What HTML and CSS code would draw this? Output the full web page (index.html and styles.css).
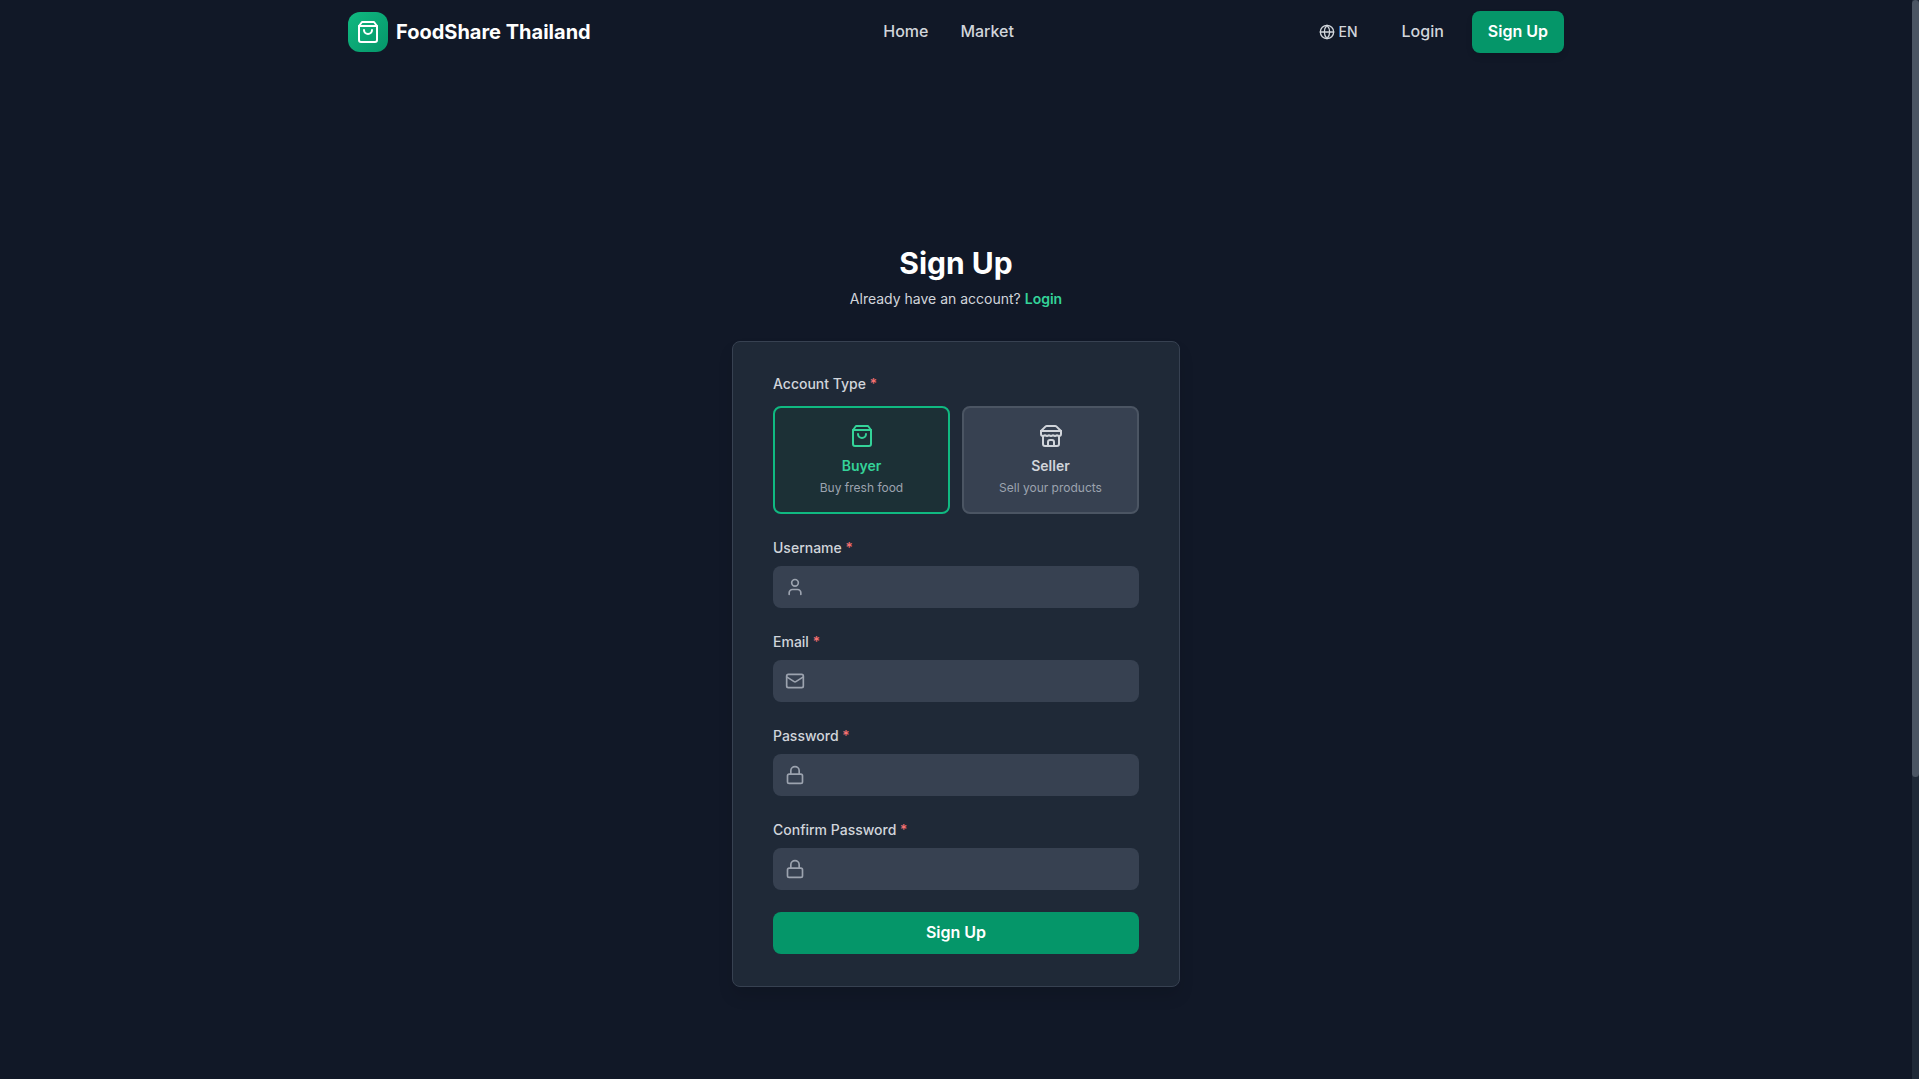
FILE: index.html
```
<!DOCTYPE html>
<html lang="en">
<head>
    <meta charset="UTF-8">
    <meta name="viewport" content="width=device-width, initial-scale=1.0">
    <title>Sign Up - FoodShare Thailand</title>
    <link rel="stylesheet" href="styles.css">
</head>
<body>
    <!-- Shared icons -->
    <svg class="icon-defs" aria-hidden="true">
        <symbol id="icon-bag" viewBox="0 0 24 24">
            <path d="M6 2 3 6v14a2 2 0 0 0 2 2h14a2 2 0 0 0 2-2V6l-3-4Z"/>
            <path d="M3 6h18"/>
            <path d="M16 10a4 4 0 0 1-8 0"/>
        </symbol>
        <symbol id="icon-lock" viewBox="0 0 24 24">
            <rect x="3" y="11" width="18" height="11" rx="2"/>
            <path d="M7 11V7a5 5 0 0 1 10 0v4"/>
        </symbol>
    </svg>

    <div class="page">
        <header class="navbar">
            <div class="navbar-inner">
                <a class="brand" href="#">
                    <span class="brand-logo"><svg class="icon icon-lg"><use href="#icon-bag"/></svg></span>
                    <span class="brand-name">FoodShare Thailand</span>
                </a>
                <nav class="nav-links">
                    <a href="#">Home</a>
                    <a href="#">Market</a>
                </nav>
                <div class="nav-actions">
                    <button class="lang-btn" type="button">
                        <svg class="icon icon-sm" viewBox="0 0 24 24">
                            <circle cx="12" cy="12" r="10"/>
                            <path d="M12 2a14.5 14.5 0 0 0 0 20 14.5 14.5 0 0 0 0-20"/>
                            <path d="M2 12h20"/>
                        </svg>
                        EN
                    </button>
                    <a class="login-link" href="#">Login</a>
                    <a class="btn nav-signup" href="#">Sign Up</a>
                </div>
            </div>
        </header>

        <main class="main">
            <h1 class="title">Sign Up</h1>
            <p class="subtitle">Already have an account? <a href="#">Login</a></p>

            <form class="card">
                <div class="field" role="group" aria-labelledby="account-type">
                    <div class="label type-label" id="account-type">Account Type <span class="required">*</span></div>
                    <div class="type-grid">
                        <button class="type-btn selected" type="button" aria-pressed="true">
                            <svg class="icon icon-lg"><use href="#icon-bag"/></svg>
                            <span class="type-name">Buyer</span>
                            <span class="type-desc">Buy fresh food</span>
                        </button>
                        <button class="type-btn" type="button" aria-pressed="false">
                            <svg class="icon icon-lg" viewBox="0 0 24 24">
                                <path d="m2 7 4.41-4.41A2 2 0 0 1 7.83 2h8.34a2 2 0 0 1 1.42.59L22 7"/>
                                <path d="M4 12v8a2 2 0 0 0 2 2h12a2 2 0 0 0 2-2v-8"/>
                                <path d="M15 22v-4a2 2 0 0 0-2-2h-2a2 2 0 0 0-2 2v4"/>
                                <path d="M2 7h20"/>
                                <path d="M22 7v3a2 2 0 0 1-2 2a2.7 2.7 0 0 1-1.59-.63.7.7 0 0 0-.82 0A2.7 2.7 0 0 1 16 12a2.7 2.7 0 0 1-1.59-.63.7.7 0 0 0-.82 0A2.7 2.7 0 0 1 12 12a2.7 2.7 0 0 1-1.59-.63.7.7 0 0 0-.82 0A2.7 2.7 0 0 1 8 12a2.7 2.7 0 0 1-1.59-.63.7.7 0 0 0-.82 0A2.7 2.7 0 0 1 4 12a2 2 0 0 1-2-2V7"/>
                            </svg>
                            <span class="type-name">Seller</span>
                            <span class="type-desc">Sell your products</span>
                        </button>
                    </div>
                </div>

                <div class="field">
                    <label class="label" for="username">Username <span class="required">*</span></label>
                    <div class="input-box">
                        <svg class="icon icon-md" viewBox="0 0 24 24">
                            <path d="M19 21v-2a4 4 0 0 0-4-4H9a4 4 0 0 0-4 4v2"/>
                            <circle cx="12" cy="7" r="4"/>
                        </svg>
                        <input type="text" id="username" name="username" required>
                    </div>
                </div>

                <div class="field">
                    <label class="label" for="email">Email <span class="required">*</span></label>
                    <div class="input-box">
                        <svg class="icon icon-md" viewBox="0 0 24 24">
                            <rect x="2" y="4" width="20" height="16" rx="2"/>
                            <path d="m22 7-8.97 5.7a1.94 1.94 0 0 1-2.06 0L2 7"/>
                        </svg>
                        <input type="email" id="email" name="email" required>
                    </div>
                </div>

                <div class="field">
                    <label class="label" for="password">Password <span class="required">*</span></label>
                    <div class="input-box">
                        <svg class="icon icon-md"><use href="#icon-lock"/></svg>
                        <input type="password" id="password" name="password" required>
                    </div>
                </div>

                <div class="field field-last">
                    <label class="label" for="confirm">Confirm Password <span class="required">*</span></label>
                    <div class="input-box">
                        <svg class="icon icon-md"><use href="#icon-lock"/></svg>
                        <input type="password" id="confirm" name="confirm" required>
                    </div>
                </div>

                <button class="btn submit" type="submit">Sign Up</button>
            </form>
        </main>
    </div>

    <div class="scroll-track" aria-hidden="true">
        <div class="scroll-thumb"></div>
    </div>
</body>
</html>
```

FILE: styles.css
```
* {
    box-sizing: border-box;
}

body {
    display: flex;
    height: 100vh;
    margin: 0;
    background-color: #111827;
    color: #d1d5db;
    font-family: Inter, 'Open Sans', sans-serif;
    font-size: 16px;
    line-height: 24px;
}

a {
    color: inherit;
    text-decoration: none;
}

button, input {
    font: inherit;
    color: inherit;
}

button {
    cursor: pointer;
}

.page {
    flex: 1;
    min-width: 0;
    overflow-y: auto;
    scrollbar-width: none;
}

/* Thin scrollbar beside the page */
.scroll-track {
    width: 7px;
    background-color: #1f2937;
}

.scroll-thumb {
    height: 72%;
    border-radius: 4px;
    background-color: #4b5563;
}

/* Icons */
.icon-defs {
    display: none;
}

.icon {
    flex-shrink: 0;
    fill: none;
    stroke: currentColor;
    stroke-width: 2;
    stroke-linecap: round;
    stroke-linejoin: round;
}

.icon-sm {
    width: 16px;
    height: 16px;
}

.icon-md {
    width: 20px;
    height: 20px;
}

.icon-lg {
    width: 24px;
    height: 24px;
}

/* Navbar */
.navbar-inner {
    display: flex;
    justify-content: space-between;
    align-items: center;
    max-width: 1280px;
    height: 64px;
    margin: 0 auto;
    padding: 0 32px;
    font-weight: 500;
}

.brand {
    display: flex;
    align-items: center;
    gap: 8px;
}

.brand-logo {
    display: flex;
    justify-content: center;
    align-items: center;
    width: 40px;
    height: 40px;
    border-radius: 12px;
    background: linear-gradient(to bottom right, #10b981, #059669);
    color: #fff;
}

.brand-name {
    color: #fff;
    font-size: 20px;
    font-weight: 700;
}

.nav-links {
    display: flex;
    gap: 32px;
    padding-bottom: 2px;
}

.nav-actions {
    display: flex;
    align-items: center;
    gap: 16px;
}

.lang-btn {
    display: flex;
    align-items: center;
    gap: 4px;
    padding: 8px 12px;
    border: none;
    background: none;
    font-size: 14px;
    line-height: 20px;
}

.login-link {
    padding: 8px 12px 10px 16px;
}

.btn {
    border: none;
    border-radius: 8px;
    background-color: #059669;
    color: #fff;
    font-weight: 600;
    text-align: center;
    line-height: 24px;
    padding: 8px 16px 10px;
}

.btn:hover {
    background-color: #047857;
}

.nav-signup {
    box-shadow: 0 4px 6px rgba(0, 0, 0, 0.1);
}

/* Sign up form */
.main {
    display: flex;
    flex-direction: column;
    align-items: center;
    min-height: 1436px;
    padding: 181px 16px 48px;
}

.title {
    margin: 0 0 8px;
    color: #fff;
    font-size: 30px;
    font-weight: 700;
    line-height: 36px;
}

.subtitle {
    margin: 0 0 32px;
    font-size: 14px;
    line-height: 20px;
}

.subtitle a {
    color: #34d399;
    font-weight: 600;
}

.card {
    width: 100%;
    max-width: 448px;
    padding: 32px 40px;
    border: 1px solid #374151;
    border-radius: 8px;
    background-color: #1f2937;
    box-shadow: 0 10px 15px rgba(0, 0, 0, 0.1);
}

.field {
    margin-bottom: 24px;
}

.field-last {
    margin-bottom: 22px;
}

.label {
    display: block;
    margin-bottom: 8px;
    font-size: 14px;
    font-weight: 500;
    line-height: 20px;
}

.type-label {
    margin-bottom: 12px;
}

.required {
    color: #f87171;
}

.type-grid {
    display: grid;
    grid-template-columns: 1fr 1fr;
    gap: 12px;
}

.type-btn {
    display: flex;
    flex-direction: column;
    align-items: center;
    padding: 16px;
    border: 2px solid #4b5563;
    border-radius: 8px;
    background-color: #374151;
}

.type-btn.selected {
    border-color: #10b981;
    background-color: #1c3036;
    color: #34d399;
}

.type-name {
    margin: 8px 0 4px;
    font-size: 14px;
    font-weight: 600;
    line-height: 20px;
}

.type-desc {
    color: #9ca3af;
    font-size: 12px;
    line-height: 16px;
}

.input-box {
    display: flex;
    align-items: center;
    gap: 12px;
    height: 42px;
    padding: 0 12px;
    border-radius: 8px;
    background-color: #374151;
}

.input-box .icon {
    color: #9ca3af;
}

.input-box input {
    flex: 1;
    min-width: 0;
    border: none;
    outline: none;
    background: none;
}

.submit {
    display: block;
    width: 100%;
}
```
